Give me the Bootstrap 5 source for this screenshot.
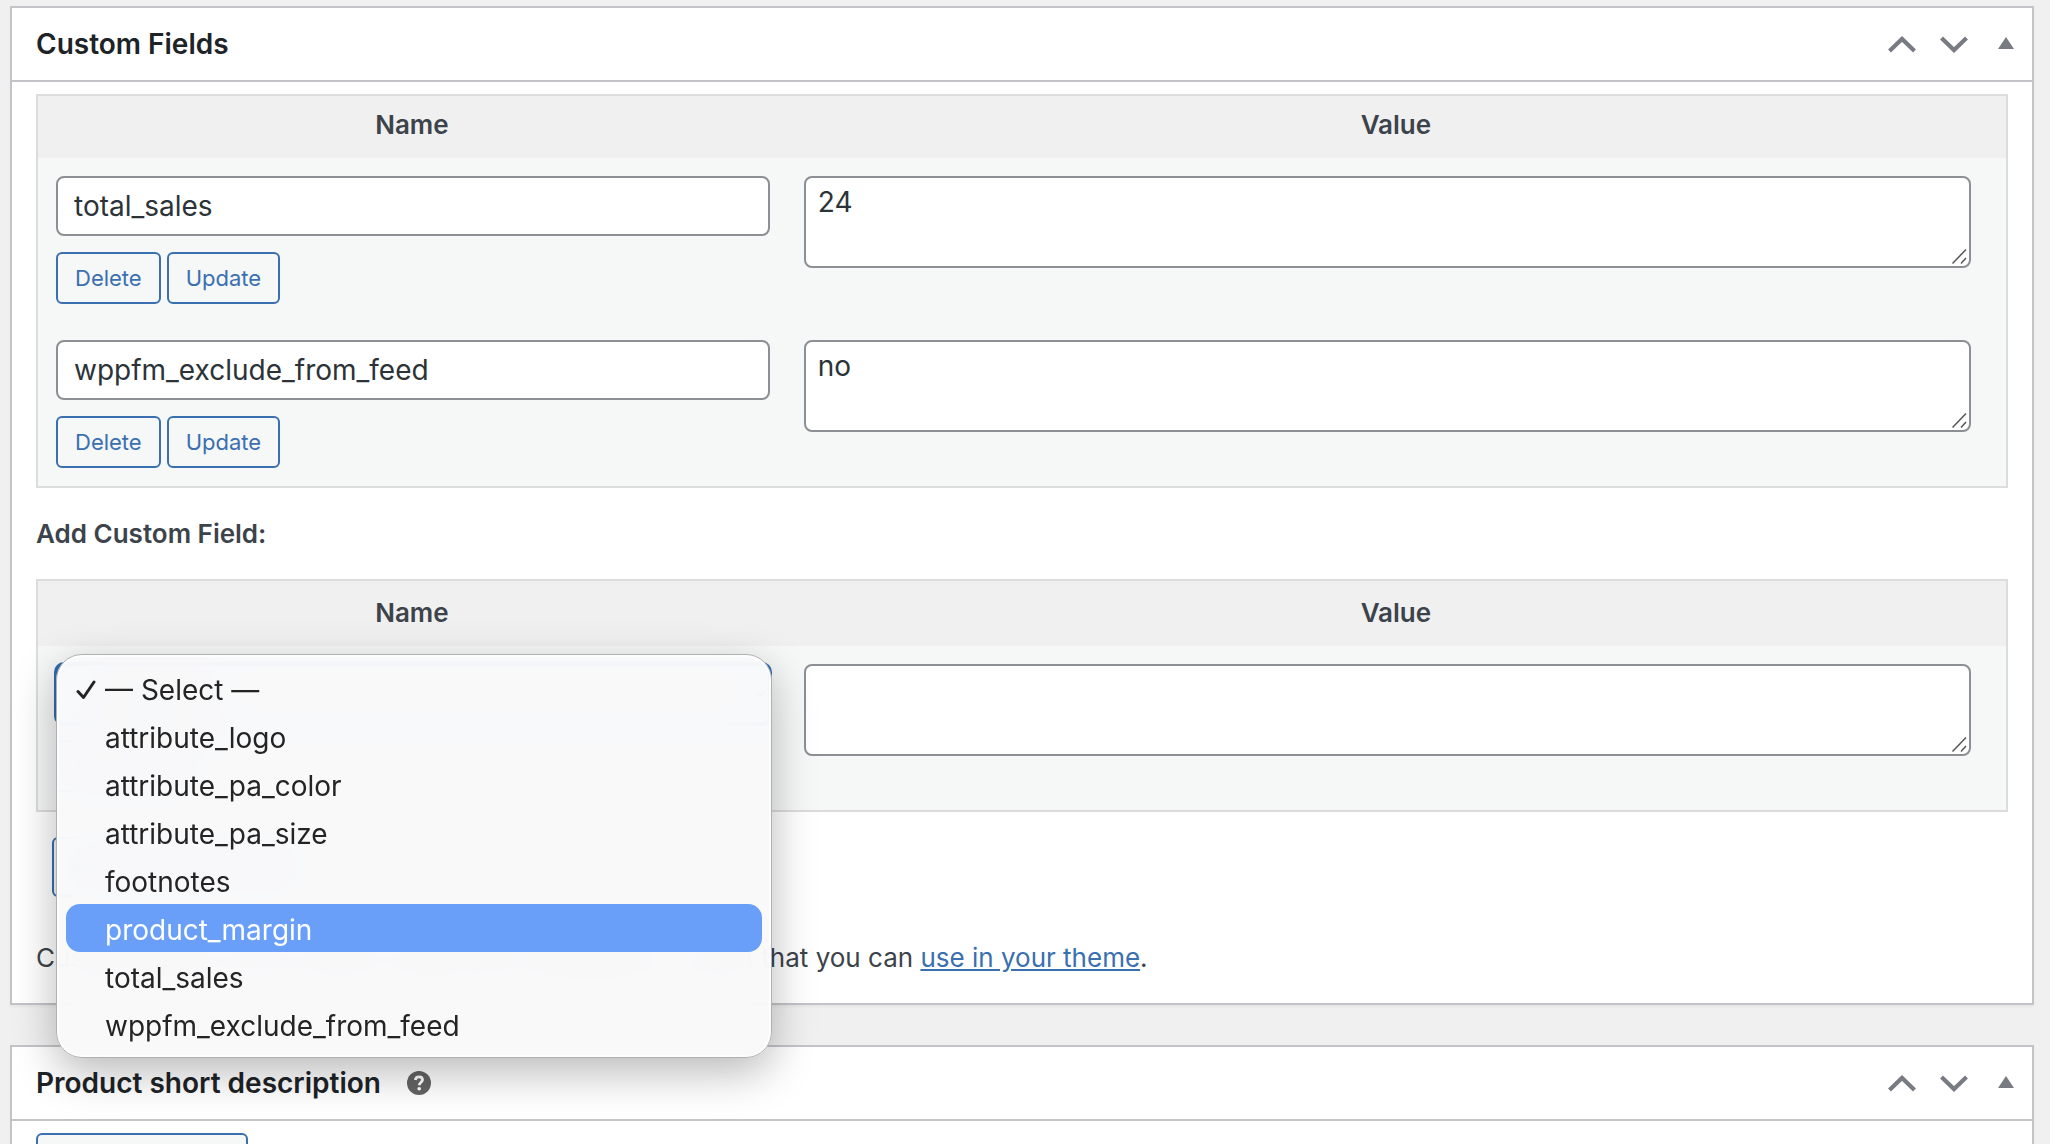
<!DOCTYPE html>
<html lang="en">
<head>
<meta charset="utf-8">
<meta name="viewport" content="width=device-width, initial-scale=1">
<title>Edit product</title>
<link href="https://cdn.jsdelivr.net/npm/bootstrap@5.3.0/dist/css/bootstrap.min.css" rel="stylesheet">
<style>
body { font-family: Inter, "Liberation Sans", sans-serif; font-size: 26px; line-height: 38px; color: #3c434a; background: #f0f0f0; }
.screen { padding: 6px 16px 0 10px; }
.postbox { background: #fff; border: 2px solid #c3c4c7; box-shadow: 0 2px 2px rgba(0,0,0,.04); }
.postbox + .postbox { margin-top: 40px; }
.postbox-head { height: 74px; padding-left: 24px; border-bottom: 2px solid #c3c4c7; }
.postbox-head h2 { font-size: 28px; line-height: 38px; font-weight: 600; color: #1d2327; }
.handle { width: 52px; height: 72px; padding: 0; border: 0; background: none; color: #787c82; display: flex; align-items: center; justify-content: center; }
.inside { padding: 12px 24px 0; }
.meta-table { width: 100%; table-layout: fixed; border: 2px solid #dcdcde; border-collapse: separate; border-spacing: 0; background: #f6f8f7; }
.meta-table th { height: 62px; padding: 10px 0 14px; text-align: center; font-weight: 600; background: #f0f0f0; }
.meta-table td { padding: 18px 16px 18px 18px; vertical-align: top; }
.meta-table td + td { padding-right: 35px; }
.meta-new th { height: 65px; padding: 12px 0 14px; }
.name-col { width: 38%; }
.wp-input { height: 60px; padding: 0 16px; border: 2px solid #8c8f94; border-radius: 8px; font-size: 28px; line-height: 38px; color: #2c3338; background-color: #fff; }
textarea.wp-input { height: 92px; min-height: 92px; padding: 5px 12px; resize: none; display: block; }
select.wp-input { border-color: #2f6cb0; box-shadow: 0 0 0 2px #2f6cb0; }
.wp-btn { height: 60px; padding: 0 16px; border: 2px solid #3a6fb0; border-radius: 6px; font-size: 26px; line-height: 38px; color: #3a6fb0; background: #f6f7f7; }
.wp-btn-small { height: 52px; padding: 0 17px; font-size: 22px; }
.btn-line { gap: 6px; margin-top: 16px; }
.grip { right: 4px; bottom: 4px; pointer-events: none; }
.add-title { margin: 27px 0 26px; font-weight: 600; }
.submit-line { margin: 25px 16px 0; }
.note { margin: 42px 0 26px; }
.note a { color: #3a6fb0; }
.options { top: -10px; left: 0; right: -2px; padding: 9px; border: 1px solid #b0b0b0; border-radius: 26px; background: rgba(249,249,250,.95); backdrop-filter: blur(20px); box-shadow: 0 14px 44px rgba(0,0,0,.28), inset 0 0 0 2px rgba(255,255,255,.8); z-index: 10; font-size: 28px; color: #242424; }
.options li { height: 48px; padding: 4px 0 0 39px; line-height: 44px; position: relative; border-radius: 14px; white-space: nowrap; }
.options li.active { background: #699ff8; color: #fff; }
.tick { position: absolute; left: 10px; top: 16px; }
.help { margin-left: 26px; color: #646464; }
</style>
</head>
<body class="vh-100 overflow-hidden">
<main class="screen">
  <section class="postbox">
    <header class="postbox-head d-flex align-items-center">
      <h2 class="mb-0 me-auto">Custom Fields</h2>
      <button class="handle" type="button" aria-label="Move up"><svg width="28" height="18" viewBox="0 0 28 18"><path d="M1.500 16 14 4 26.500 16" fill="none" stroke="currentColor" stroke-width="4.200"/></svg></button>
      <button class="handle" type="button" aria-label="Move down"><svg width="28" height="18" viewBox="0 0 28 18"><path d="M1.500 3 14 15 26.500 3" fill="none" stroke="currentColor" stroke-width="4.200"/></svg></button>
      <button class="handle" type="button" aria-label="Toggle panel"><svg width="16" height="16" viewBox="0 0 16 16"><path d="M8 1 16 13H0Z" fill="currentColor"/></svg></button>
    </header>
    <div class="inside">
      <table class="meta-table">
        <thead><tr><th class="name-col" scope="col">Name</th><th scope="col">Value</th></tr></thead>
        <tbody>
          <tr>
            <td>
              <input class="wp-input w-100 d-block" type="text" value="total_sales" aria-label="Name">
              <div class="btn-line d-flex"><button class="wp-btn wp-btn-small" type="button">Delete</button><button class="wp-btn wp-btn-small" type="button">Update</button></div>
            </td>
            <td><div class="position-relative"><textarea class="wp-input w-100" aria-label="Value">24</textarea><svg class="grip position-absolute" width="15" height="15" viewBox="0 0 15 15"><path d="M.5 14.500 14 .5M9 14.500 14 9" stroke="#555" stroke-width="1.500"/></svg></div></td>
          </tr>
          <tr>
            <td>
              <input class="wp-input w-100 d-block" type="text" value="wppfm_exclude_from_feed" aria-label="Name">
              <div class="btn-line d-flex"><button class="wp-btn wp-btn-small" type="button">Delete</button><button class="wp-btn wp-btn-small" type="button">Update</button></div>
            </td>
            <td><div class="position-relative"><textarea class="wp-input w-100" aria-label="Value">no</textarea><svg class="grip position-absolute" width="15" height="15" viewBox="0 0 15 15"><path d="M.5 14.500 14 .5M9 14.500 14 9" stroke="#555" stroke-width="1.500"/></svg></div></td>
          </tr>
        </tbody>
      </table>
      <p class="add-title">Add Custom Field:</p>
      <table class="meta-table meta-new">
        <thead><tr><th class="name-col" scope="col">Name</th><th scope="col">Value</th></tr></thead>
        <tbody>
          <tr>
            <td>
              <div class="position-relative">
                <select class="wp-input w-100 d-block" aria-label="Name"><option>— Select —</option></select>
                <ul class="options position-absolute list-unstyled mb-0" role="listbox" aria-label="Name">
                  <li role="option" aria-selected="true"><svg class="tick" width="20" height="20" viewBox="0 0 20 20"><path d="M2 11.500 7.500 17.500 18 2" fill="none" stroke="currentColor" stroke-width="3" stroke-linecap="round" stroke-linejoin="round"/></svg>— Select —</li>
                  <li role="option">attribute_logo</li>
                  <li role="option">attribute_pa_color</li>
                  <li role="option">attribute_pa_size</li>
                  <li role="option">footnotes</li>
                  <li role="option" class="active">product_margin</li>
                  <li role="option">total_sales</li>
                  <li role="option">wppfm_exclude_from_feed</li>
                </ul>
              </div>
              <div class="btn-line d-flex"><button class="wp-btn wp-btn-small" type="button">Enter new</button></div>
            </td>
            <td><div class="position-relative"><textarea class="wp-input w-100" aria-label="Value"></textarea><svg class="grip position-absolute" width="15" height="15" viewBox="0 0 15 15"><path d="M.5 14.500 14 .5M9 14.500 14 9" stroke="#555" stroke-width="1.500"/></svg></div></td>
          </tr>
        </tbody>
      </table>
      <div class="submit-line"><button class="wp-btn d-block" type="button">Add Custom Field</button></div>
      <p class="note">Custom fields can be used to add extra metadata to a post that you can <a href="#">use in your theme</a>.</p>
    </div>
  </section>
  <section class="postbox">
    <header class="postbox-head d-flex align-items-center">
      <h2 class="mb-0">Product short description</h2>
      <svg class="help me-auto" width="24" height="24" viewBox="0 0 24 24" role="img" aria-label="Help"><circle cx="12" cy="12" r="12" fill="currentColor"/><path d="M8.300 9C8.600 6.800 10 5.800 12 5.800s3.500 1.200 3.500 3c0 2.500-3.200 2.400-3.200 5.400" fill="none" stroke="#fff" stroke-width="2.800"/><circle cx="12.200" cy="17.800" r="1.800" fill="#fff"/></svg>
      <button class="handle" type="button" aria-label="Move up"><svg width="28" height="18" viewBox="0 0 28 18"><path d="M1.500 16 14 4 26.500 16" fill="none" stroke="currentColor" stroke-width="4.200"/></svg></button>
      <button class="handle" type="button" aria-label="Move down"><svg width="28" height="18" viewBox="0 0 28 18"><path d="M1.500 3 14 15 26.500 3" fill="none" stroke="currentColor" stroke-width="4.200"/></svg></button>
      <button class="handle" type="button" aria-label="Toggle panel"><svg width="16" height="16" viewBox="0 0 16 16"><path d="M8 1 16 13H0Z" fill="currentColor"/></svg></button>
    </header>
    <div class="inside"><button class="wp-btn d-flex align-items-center" type="button"><svg class="me-2" width="35" height="35" viewBox="0 0 20 20" aria-hidden="true"><path d="M2 5h3l1-2h4l1 2h2v9H2ZM14 7h4v8a2 2 0 1 1-2-2V9h-2Z" fill="currentColor"/></svg>Add Media</button></div>
  </section>
</main>
<script src="https://cdn.jsdelivr.net/npm/bootstrap@5.3.0/dist/js/bootstrap.bundle.min.js"></script>
</body>
</html>
